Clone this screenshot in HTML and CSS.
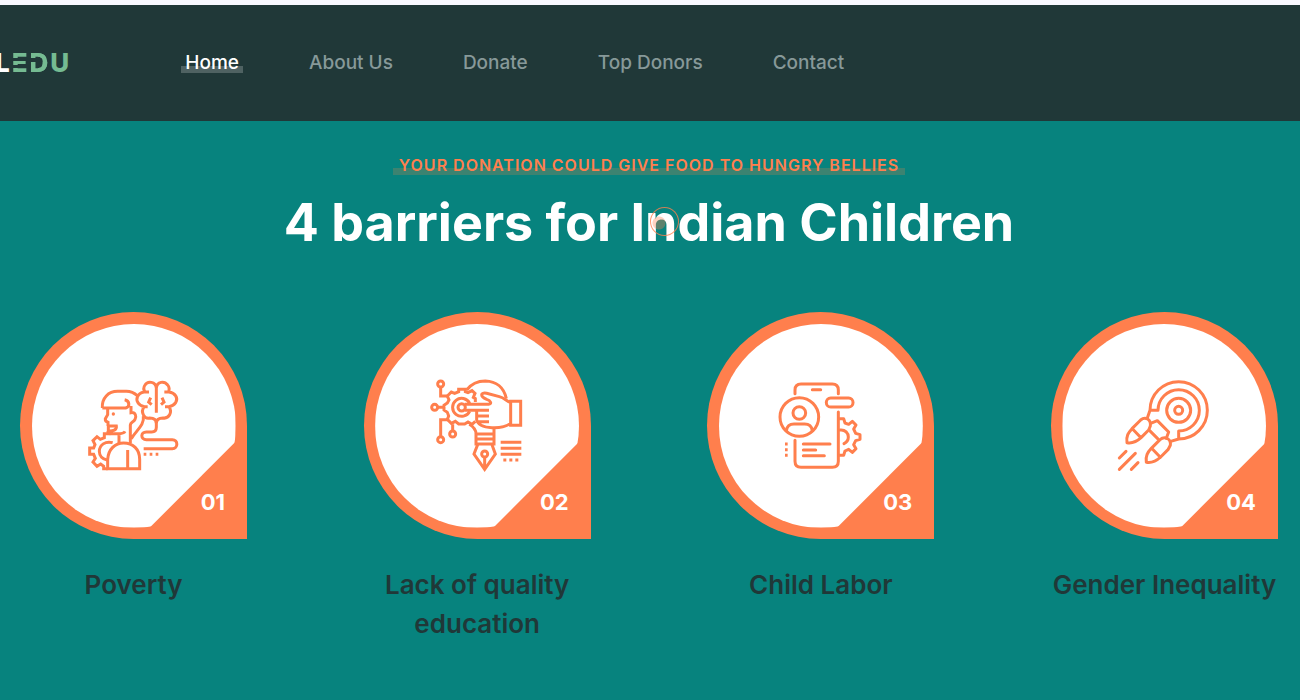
FILE: index.html
```html
<!DOCTYPE html>
<html lang="en">
<head>
<meta charset="utf-8">
<meta name="viewport" content="width=device-width, initial-scale=1">
<title>4 barriers for Indian Children</title>
<link rel="stylesheet" href="styles.css">
</head>
<body>
<header class="header">
  <a class="logo" href="#"><span class="logo-l">L</span><span class="logo-e">E</span><span class="logo-d">D</span><span class="logo-u">U</span></a>
  <nav class="nav">
    <a class="nav-link active" href="#">Home</a>
    <a class="nav-link" href="#">About Us</a>
    <a class="nav-link" href="#">Donate</a>
    <a class="nav-link" href="#">Top Donors</a>
    <a class="nav-link" href="#">Contact</a>
  </nav>
</header>
<main class="barriers">
  <div class="intro">
    <p class="eyebrow">Your donation could give food to hungry bellies</p>
    <h1 class="heading">4 barriers for Indian Children</h1>
  </div>
  <div class="cards">
    <article class="card">
      <div class="drop">
        <div class="disc">
          <svg class="icon" viewBox="-4 3 330 330" aria-hidden="true">
            <path d="M66 114C64 84 84 64 112 64H138C152 64 163 70 172 78M66 114H136C150 110 148 92 133 89M152 108V128C166 126 169 140 164 148C160 157 150 156 150 165V219M189 138C193 166 168 180 153 206"/>
            <path d="M82 116V134L75 146Q74 155 83 157V168M83 168H108C110 180 98 184 84 183V168M83 183V188Q84 191 90 191H112C126 191 132 188 134 184M116 192V219"/>
            <path d="M82 296V268C84 238 104 219 130 219C158 219 178 238 178 268V296ZM142 240V296"/>
            <path d="M97 218C75 212 57 225 57 244C57 259 67 268 80 270M90 191H72V203L60 208L50 200L38 212L44 224L40 234H28V253H40L45 265L38 276L50 289L61 282L70 289V296H82"/>
            <path d="M228 128V54C226 34 202 32 194 45C189 52 190 60 194 66H206M191 66C170 70 166 88 173 98C177 105 184 108 192 110H202M192 110C179 126 192 148 208 144C220 144 228 148 228 160C228 148 237 144 248 144C266 147 277 127 266 110H254M266 110C276 108 282 104 286 98C295 84 284 68 266 66H252M264 66C268 60 267 50 262 45C252 32 230 34 228 54M211 83L205 96L214 104M245 83L251 96L242 104"/>
            <path d="M228 156V172Q228 186 214 186H198C180 186 180 209 198 209H276C294 209 294 236 276 236H190"/>
            <path d="M190 253H198M208 253H216M226 253H234"/>
            <circle class="solid" cx="99" cy="132" r="5"/>
          </svg>
        </div>
        <span class="number">01</span>
      </div>
      <h2 class="title">Poverty</h2>
    </article>
    <article class="card">
      <div class="drop">
        <div class="disc">
          <svg class="icon" viewBox="-4 3 330 330" aria-hidden="true">
            <circle cx="52" cy="42" r="9"/><circle cx="34" cy="112" r="9"/><circle cx="88" cy="192" r="9"/><circle cx="52" cy="209" r="9"/>
            <path d="M52 51V78H74M43 112H62M52 200V149H74M88 183V163"/>
            <path d="M156 96V86L150 82L155 70L146 62L134 68L126 65V58H106V65L94 70L84 66L72 78L77 90L72 99L62 106V120L72 127L76 138L72 148L84 160L96 154L106 162H124L134 156L146 163L156 154"/>
            <path d="M139 100A27 27 0 1 0 139 124"/>
            <circle cx="115" cy="112" r="11"/>
            <path d="M124 103H196C206 102 203 92 190 88C170 80 170 66 190 70L228 80C244 84 252 96 262 97M124 121H197M160 138H197M160 155H197M160 121V150C164 166 184 172 206 173C230 174 246 172 262 160M262 94H292V166H262Z"/>
            <path d="M130 60C145 40 163 33 186 33C218 34 242 52 249 86M138 163C153 172 158 180 158 192V222H212V173M158 192H212M158 207H212"/>
            <path d="M163 224L152 252L184 298L216 252L206 224M184 261V296"/>
            <circle cx="184" cy="252" r="9"/>
            <path d="M232 217H294M232 235H294M232 253H294M240 270H249M258 270H267M276 270H285"/>
          </svg>
        </div>
        <span class="number">02</span>
      </div>
      <h2 class="title">Lack of quality education</h2>
    </article>
    <article class="card">
      <div class="drop">
        <div class="disc">
          <svg class="icon" viewBox="-4 3 330 330" aria-hidden="true">
            <g class="round">
              <path d="M83 71V60Q83 42 101 42H195Q213 42 213 60V71M135 59H160M83 211V274Q83 292 101 292H195Q213 292 213 274V126"/>
              <circle cx="96" cy="141" r="58"/><circle cx="96" cy="129" r="19"/>
              <path d="M57 182C59 168 68 162 80 162H112C124 162 133 168 135 182"/>
              <rect x="177" y="84" width="80" height="27" rx="13"/>
              <path d="M108 222H188M108 240H145M108 257H171"/>
              <path d="M215 146H229L233 159L244 163L255 154L266 165L259 177L265 190L278 194V208L265 212L259 224L266 236L255 247L244 238L233 243L229 256H215M218 180C234 178 243 190 243 201C243 211 238 217 230 221"/>
            </g>
            <path d="M53 222H61M53 239H61M53 256H61"/>
          </svg>
        </div>
        <span class="number">03</span>
      </div>
      <h2 class="title">Child Labor</h2>
    </article>
    <article class="card">
      <div class="drop">
        <div class="disc">
          <svg class="icon" viewBox="3 3 330 330" aria-hidden="true">
            <g class="round">
              <circle cx="212" cy="121" r="12"/><circle cx="212" cy="121" r="36"/>
              <path d="M118 144L126 121A86 86 0 1 1 212 207L188 214M126 121H150A62 62 0 1 1 212 183V207"/>
              <path d="M128 160L148 152L182 186L175 205M125 182L149 206"/>
              <path d="M57 218C54 198 61 188 72 176L98 150C112 138 130 148 127 168L122 180L100 202C86 215 73 221 57 218ZM73 176L99 203"/>
              <path d="M115 277C112 257 119 247 130 235L156 209C170 197 190 206 187 226L180 239L158 261C144 274 131 280 115 277ZM131 235L157 262"/>
              <path d="M34 264L54 244M34 298L82 250M70 298L90 278"/>
            </g>
          </svg>
        </div>
        <span class="number">04</span>
      </div>
      <h2 class="title">Gender Inequality</h2>
    </article>
  </div>
</main>
<div class="cursor" aria-hidden="true"></div>
</body>
</html>
```
FILE: styles.css
```css
:root {
  --teal: #07837e;
  --dark: #203838;
  --orange: #ff7f4d;
  --green: #75bb92;
}

* {
  box-sizing: border-box;
}

body {
  margin: 0;
  min-height: 100vh;
  overflow-x: hidden;
  background: var(--teal);
  color: var(--dark);
  font-family: Inter, "Liberation Sans", sans-serif;
}

.header {
  display: flex;
  align-items: center;
  gap: 112px;
  border-top: 5px solid #f8f9ff;
  background: var(--dark);
  padding: 42px 0;
}

.logo {
  display: flex;
  gap: 2px;
  margin-left: -5px;
  color: var(--green);
  font-size: 26px;
  font-weight: 800;
  line-height: 32px;
  text-decoration: none;
}

.logo-l {
  color: #fff;
}

.logo-e,
.logo-d {
  color: transparent;
  background-clip: text;
  -webkit-background-clip: text;
}

.logo-e {
  background-image: linear-gradient(var(--green) 11px, transparent 11px 14px, var(--green) 14px 18px, transparent 18px 21px, var(--green) 21px);
}

.logo-d {
  background-image: linear-gradient(90deg, transparent 8px, var(--green) 8px), linear-gradient(var(--green) 11px, transparent 11px 15px, var(--green) 15px);
}

.nav {
  display: flex;
  gap: 62px;
}

.nav-link {
  padding: 0 4px;
  color: #879999;
  font-size: 19px;
  font-weight: 500;
  line-height: 30px;
  text-decoration: none;
  white-space: nowrap;
}

.nav-link.active {
  background: linear-gradient(#4f6262, #4f6262) 0 18px / 100% 7px no-repeat;
  color: #fff;
}

.barriers {
  padding: 34px 22px 40px 20px;
}

.intro {
  text-align: center;
}

.eyebrow {
  display: inline-block;
  margin: 0;
  padding: 0 6px;
  background: linear-gradient(#3c8371, #3c8371) 0 13px / 100% 7px no-repeat;
  color: var(--orange);
  font-size: 16px;
  font-weight: 600;
  letter-spacing: 1px;
  line-height: 20px;
  text-transform: uppercase;
}

.heading {
  margin: 13px 0 54px;
  color: #fff;
  font-size: 52px;
  font-weight: 700;
  line-height: 70px;
}

.cards {
  display: flex;
  justify-content: space-between;
  gap: 20px;
}

.card {
  width: 227px;
  text-align: center;
}

.drop {
  position: relative;
  display: grid;
  place-items: center;
  height: 227px;
  border-radius: 50% 50% 0 50%;
  background: var(--orange);
}

.disc {
  display: grid;
  place-items: center;
  width: 204px;
  height: 204px;
  border-radius: 50%;
  background: #fff;
  clip-path: polygon(0 0, 100% 0, 100% 58%, 58% 100%, 0 100%);
}

.icon {
  width: 110px;
  height: 110px;
  fill: none;
  stroke: var(--orange);
  stroke-width: 9;
}

.round {
  stroke-linecap: round;
  stroke-linejoin: round;
}

.solid {
  fill: var(--orange);
  stroke: none;
}

.number {
  position: absolute;
  right: 22px;
  bottom: 22px;
  color: #fff;
  font-size: 22px;
  font-weight: 700;
  line-height: 30px;
}

.title {
  margin: 26px 0 0;
  font-size: 26px;
  font-weight: 600;
  line-height: 39px;
}

.cursor {
  position: absolute;
  left: 650px;
  top: 207px;
  width: 29px;
  height: 29px;
  border: 1px solid rgba(255, 127, 77, 0.8);
  border-radius: 50%;
  background: radial-gradient(circle at 8px 15px, rgba(255, 127, 77, 0.35) 6px, transparent 7px);
  pointer-events: none;
}
```
